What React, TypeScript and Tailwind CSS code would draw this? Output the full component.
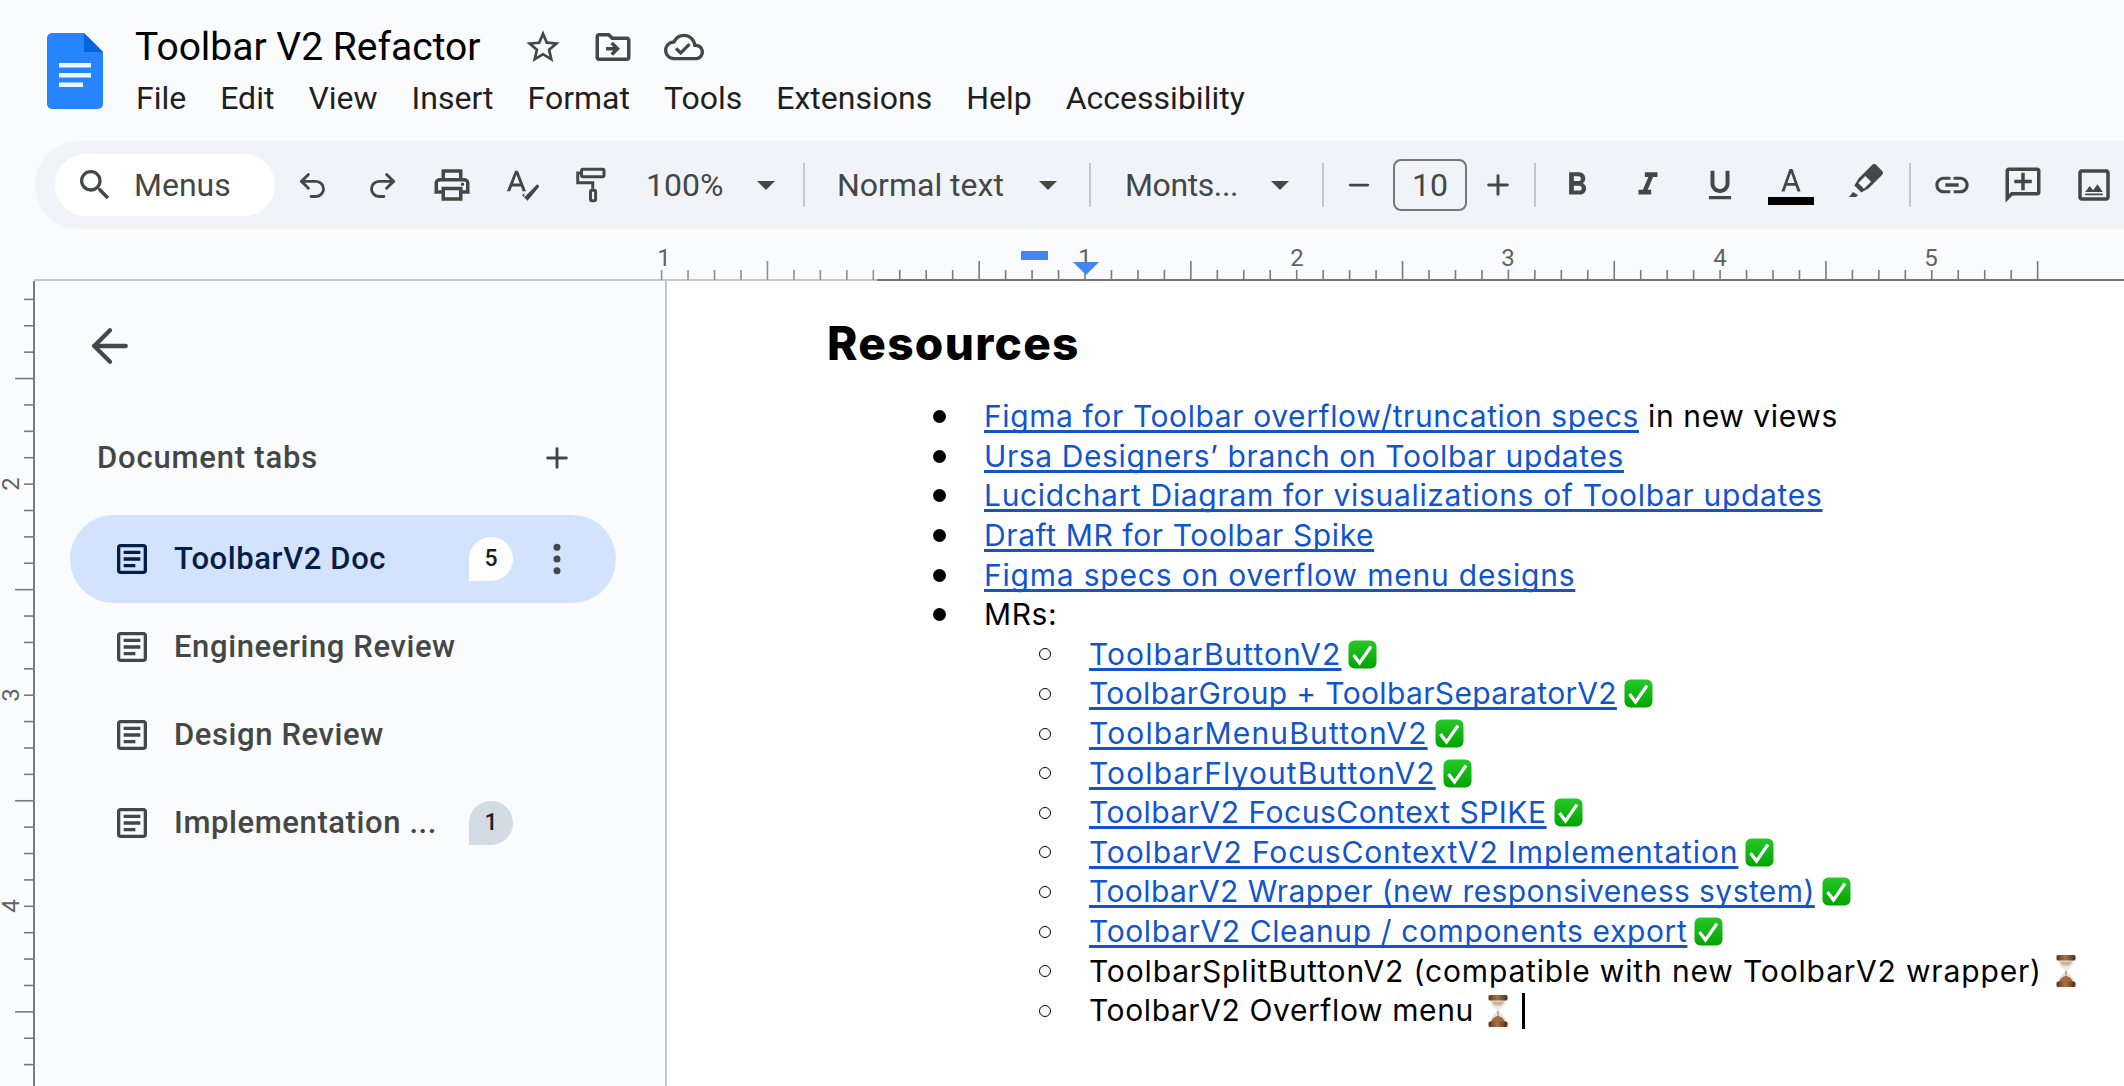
import React from "react";
import { Undo2, Redo2, ArrowLeft, Plus, Minus, EllipsisVertical } from "lucide-react";

const ui = "font-['Roboto',sans-serif]";
const doc = "font-['Inter',sans-serif]";

function M({ d, size = 34, className = "" }: { d: string; size?: number; className?: string }) {
  return (
    <svg width={size} height={size} viewBox="0 0 24 24" className={`fill-[#444746] shrink-0 ${className}`}>
      <path d={d} />
    </svg>
  );
}

const P = {
  star: "M22 9.24l-7.19-.62L12 2 9.19 8.63 2 9.24l5.46 4.73L5.82 21 12 17.27 18.18 21l-1.63-7.03L22 9.24zM12 15.4l-3.76 2.27 1-4.28-3.32-2.88 4.38-.38L12 6.1l1.71 4.04 4.38.38-3.32 2.88 1 4.28L12 15.4z",
  move: "M20 6h-8l-2-2H4c-1.1 0-1.99.9-1.99 2L2 18c0 1.1.9 2 2 2h16c1.1 0 2-.9 2-2V8c0-1.1-.9-2-2-2zm0 12H4V6h5.17l2 2H20v10zm-8.01-9l-1.41 1.41L12.16 12H8v2h4.16l-1.59 1.59L11.99 17 16 13.01 11.99 9z",
  cloud: "M19.35 10.04C18.67 6.59 15.64 4 12 4 9.11 4 6.6 5.64 5.35 8.04 2.34 8.36 0 10.91 0 14c0 3.31 2.69 6 6 6h13c2.76 0 5-2.24 5-5 0-2.64-2.05-4.78-4.65-4.96zM19 18H6c-2.21 0-4-1.79-4-4 0-2.05 1.53-3.76 3.56-3.97l1.07-.11.5-.95C8.08 7.14 9.94 6 12 6c2.62 0 4.88 1.86 5.39 4.43l.3 1.5 1.53.11c1.56.1 2.78 1.41 2.78 2.96 0 1.65-1.35 3-3 3zm-9-3.82l-2.09-2.09L6.5 13.5 10 17l6.01-6.01-1.41-1.41z",
  search: "M15.5 14h-.79l-.28-.27C15.41 12.59 16 11.11 16 9.5 16 5.91 13.09 3 9.5 3S3 5.91 3 9.5 5.91 16 9.5 16c1.61 0 3.09-.59 4.23-1.57l.27.28v.79l5 4.99L20.49 19l-4.99-5zm-6 0C7.01 14 5 11.99 5 9.5S7.01 5 9.5 5 14 7.01 14 9.5 11.99 14 9.5 14z",
  print: "M19 8h-1V3H6v5H5c-1.66 0-3 1.34-3 3v6h4v4h12v-4h4v-6c0-1.66-1.34-3-3-3zM8 5h8v3H8V5zm8 12v2H8v-4h8v2zm2-2v-2H6v2H4v-4c0-.55.45-1 1-1h14c.55 0 1 .45 1 1v4h-2zm0-4.5a1 1 0 1 0 0 2 1 1 0 0 0 0-2z",
  spell: "M12.45 16h2.09L9.43 3H7.57L2.46 16h2.09l1.12-3h5.64l1.14 3zm-6.02-5L8.5 5.48 10.57 11H6.43zm15.16.59l-8.09 8.09L13.5 17l-1.4 1.4 3.4 3.6L23 13l-1.41-1.41z",
  bold: "M15.6 10.79c.97-.67 1.65-1.77 1.65-2.79 0-2.26-1.75-4-4-4H7v14h7.04c2.09 0 3.71-1.7 3.71-3.79 0-1.52-.86-2.82-2.15-3.42zM10 6.5h3c.83 0 1.5.67 1.5 1.5s-.67 1.5-1.5 1.5h-3v-3zm3.5 9H10v-3h3.5c.83 0 1.5.67 1.5 1.5s-.67 1.5-1.5 1.5z",
  italic: "M10 4v3h2.21l-3.42 8H6v3h8v-3h-2.21l3.42-8H18V4z",
  under: "M12 17c3.31 0 6-2.69 6-6V3h-2.5v8c0 1.93-1.57 3.5-3.5 3.5S8.5 12.93 8.5 11V3H6v8c0 3.31 2.69 6 6 6zm-7 2v2h14v-2H5z",
  link: "M3.9 12c0-1.71 1.39-3.1 3.1-3.1h4V7H7c-2.76 0-5 2.24-5 5s2.24 5 5 5h4v-1.9H7c-1.71 0-3.1-1.39-3.1-3.1zM8 13h8v-2H8v2zm9-6h-4v1.9h4c1.71 0 3.1 1.39 3.1 3.1s-1.39 3.1-3.1 3.1h-4V17h4c2.76 0 5-2.24 5-5s-2.24-5-5-5z",
  comment: "M4 2h16a2 2 0 0 1 2 2v12a2 2 0 0 1-2 2H6l-4 4V4a2 2 0 0 1 2-2zm0 2v13.17L5.17 16H20V4H4zm7 1h2v4h4v2h-4v4h-2v-4H7V9h4V5z",
  image: "M19 5v14H5V5h14m0-2H5c-1.1 0-2 .9-2 2v14c0 1.1.9 2 2 2h14c1.1 0 2-.9 2-2V5c0-1.1-.9-2-2-2zM7 16l2.5-3.5L11.5 15l2.5-3.5 3 4.500H7zm0 .8h10v1H7z",
  article: "M19 5v14H5V5h14m0-2H5c-1.1 0-2 .9-2 2v14c0 1.1.9 2 2 2h14c1.1 0 2-.9 2-2V5c0-1.1-.9-2-2-2zM14 17H7v-2h7v2zm3-4H7v-2h10v2zm0-4H7V7h10v2z",
};

function DocsLogo() {
  return (
    <svg width="56" height="76" viewBox="0 0 56 76" className="shrink-0">
      <path d="M5 0h32l19 19v52a5 5 0 0 1-5 5H5a5 5 0 0 1-5-5V5a5 5 0 0 1 5-5z" fill="#2684fc" />
      <path d="M37 0l19 19H37V0z" fill="#0066da" />
      <path d="M12 30h32v4.500H12zM12 40h32v4.500H12zM12 49.500h24v4.500H12z" fill="#fff" fillOpacity="0.92" />
    </svg>
  );
}

function Caret() {
  return <span className="w-0 h-0 border-l-[9px] border-r-[9px] border-t-[9px] border-l-transparent border-r-transparent border-t-[#444746]" />;
}

function Sep() {
  return <span className="w-[2px] h-[44px] bg-[#c7c7c7] shrink-0" />;
}

function Btn({ w = "w-[70px]", children }: { w?: string; children: React.ReactNode }) {
  return <span className={`${w} h-full flex items-center justify-center shrink-0`}>{children}</span>;
}

function PaintRoller() {
  return (
    <svg width="36" height="38" viewBox="0 0 24 25" fill="none" stroke="#444746" strokeWidth="2" className="shrink-0">
      <rect x="5" y="2" width="15" height="5" rx="1" />
      <path d="M5 4.500H2.500V11H12.500V15" />
      <rect x="11" y="16" width="3.400" height="7" rx="1" />
    </svg>
  );
}

function Highlighter() {
  return (
    <svg width="36" height="36" viewBox="0 0 36 36" className="shrink-0 -mt-[6px]">
      <g transform="rotate(45 18 18)">
        <rect x="11" y="-2" width="14" height="24" rx="3" fill="#444746" />
        <path d="M11 20h14l-2 8H13z" fill="#444746" />
        <rect x="14" y="13.500" width="8" height="10" fill="#f0f4f9" />
      </g>
      <path d="M2 33l4-5 5 3-2 2z" fill="#444746" />
    </svg>
  );
}

function TextColor() {
  return (
    <span className="flex flex-col items-center w-[46px]">
      <svg width="30" height="30" viewBox="0 0 20 20" className="fill-[#444746]">
        <path d="M9 2 3.600 17h2.100l1.300-3.800h6l1.300 3.800h2.100L11 2H9zm-1.400 9.400L10 4.600l2.400 6.800H7.600z" />
      </svg>
      <span className="w-[46px] h-[8px] bg-black mt-[1px]" />
    </span>
  );
}

function Toolbar() {
  return (
    <div className={`${ui} ml-[35px] h-[88px] rounded-l-[44px] bg-[#f0f4f9] flex items-center text-[#444746] text-[32px] overflow-hidden`}>
      <div className="ml-[20px] w-[220px] h-[62px] rounded-full bg-white flex items-center pl-[20px] shrink-0">
        <M d={P.search} size={40} />
        <span className="ml-[19px]">Menus</span>
      </div>
      <span className="w-[2px] shrink-0" />
      <Btn><Undo2 size={33} strokeWidth={2.1} color="#444746" /></Btn>
      <Btn><Redo2 size={33} strokeWidth={2.1} color="#444746" /></Btn>
      <Btn><M d={P.print} size={42} /></Btn>
      <Btn><M d={P.spell} size={38} /></Btn>
      <Btn><PaintRoller /></Btn>
      <span className="ml-[19px] w-[82px] shrink-0">100%</span>
      <span className="ml-[29px] w-[18px] flex"><Caret /></span>
      <span className="ml-[28px] flex"><Sep /></span>
      <span className="ml-[32px] w-[172px] shrink-0">Normal text</span>
      <span className="ml-[30px] w-[18px] flex"><Caret /></span>
      <span className="ml-[32px] flex"><Sep /></span>
      <span className="ml-[34px] w-[114px] shrink-0 tracking-[-0.4px]">Monts...</span>
      <span className="ml-[32px] w-[18px] flex"><Caret /></span>
      <span className="ml-[33px] flex"><Sep /></span>
      <Btn w="w-[69px]"><Minus size={30} strokeWidth={2.2} color="#444746" /></Btn>
      <span className="w-[74px] h-[52px] rounded-[8px] border-2 border-[#747775] flex items-center justify-center shrink-0">10</span>
      <Btn w="w-[62px]"><Plus size={32} strokeWidth={2.2} color="#444746" /></Btn>
      <span className="ml-[5px] flex"><Sep /></span>
      <Btn w="w-[81px]"><M d={P.bold} size={38} /></Btn>
      <Btn w="w-[62px]"><M d={P.italic} size={38} /></Btn>
      <Btn w="w-[82px]"><M d={P.under} size={38} /></Btn>
      <Btn w="w-[60px]"><TextColor /></Btn>
      <Btn w="w-[88px]"><Highlighter /></Btn>
      <Sep />
      <Btn w="w-[82px]"><M d={P.link} size={40} /></Btn>
      <Btn w="w-[60px]"><M d={P.comment} size={42} /></Btn>
      <Btn w="w-[82px]"><M d={P.image} size={42} /></Btn>
    </div>
  );
}

function HRuler() {
  const origin = 1085;
  const inch = 211.7;
  const ticks: React.ReactNode[] = [];
  for (let i = -16; i <= 36; i++) {
    const x = origin + (i * inch) / 8;
    if (x < 36 || x > 2124) continue;
    const tall = ((i % 8) + 8) % 8 === 4;
    const col = x < 877 ? "#8f8f8f" : "#7a7a7a";
    ticks.push(<line key={i} x1={x} x2={x} y1={tall ? 32 : 41} y2={51} stroke={col} strokeWidth={1.6} />);
  }
  const nums: [string, number][] = [["1", 664], ["1", 1085], ["2", 1297], ["3", 1508], ["4", 1720], ["5", 1931]];
  return (
    <svg width="2124" height="52" className="block shrink-0">
      <line x1="34" x2="877" y1="51" y2="51" stroke="#c7c7c7" strokeWidth="2" />
      <line x1="877" x2="2124" y1="51" y2="51" stroke="#757575" strokeWidth="2" />
      {ticks}
      {nums.map(([n, x], i) => (
        <text key={i} x={x} y={37} textAnchor="middle" fontFamily="Roboto, sans-serif" fontSize="24" fill="#5f6368">{n}</text>
      ))}
      <rect x="1021" y="22" width="27" height="9" fill="#4285f4" />
      <path d="M1073 33h26l-13 13z" fill="#4285f4" />
    </svg>
  );
}

function VRuler() {
  const origin = 273;
  const inch = 211.1;
  const ticks: React.ReactNode[] = [];
  for (let i = 1; i <= 32; i++) {
    const y = origin + (i * inch) / 8 - 281;
    if (y < 2) continue;
    const tall = i % 8 === 4;
    ticks.push(<line key={i} y1={y} y2={y} x1={tall ? 15 : 24} x2={34} stroke="#7a7a7a" strokeWidth={1.6} />);
  }
  const num = "absolute left-[1px] w-[20px] h-[28px] flex items-center justify-center -rotate-90 text-[24px] leading-none text-[#5f6368]";
  return (
    <div className="relative w-[35px] h-[805px] shrink-0">
      <svg width="35" height="805" className="block">
        <line x1="34" x2="34" y1="0" y2="805" stroke="#7a7a7a" strokeWidth="2" />
        {ticks}
      </svg>
      <span className={`${num} top-[189px]`}>2</span>
      <span className={`${num} top-[400px]`}>3</span>
      <span className={`${num} top-[611px]`}>4</span>
    </div>
  );
}

function Badge({ n, active }: { n: number; active?: boolean }) {
  return (
    <span className={`absolute left-[399px] top-[22px] w-[44px] h-[44px] rounded-full rounded-bl-none flex items-center justify-center text-[23px] font-medium tracking-normal text-[#1f1f1f] ${active ? "bg-white" : "bg-[#d3dbe5]"}`}>
      {n}
    </span>
  );
}

function Tab({ label, active, badge }: { label: string; active?: boolean; badge?: number }) {
  return (
    <div className={`relative h-[88px] w-[546px] flex items-center pl-[42px] shrink-0 ${active ? "bg-[#d3e3fd] rounded-full text-[#041e49]" : "text-[#444746]"}`}>
      <svg width="40" height="40" viewBox="0 0 24 24" className={`shrink-0 ${active ? "fill-[#041e49]" : "fill-[#444746]"}`}>
        <path d={P.article} />
      </svg>
      <span className="ml-[22px] text-[31px] font-medium whitespace-nowrap tracking-[0.6px]">{label}</span>
      {badge !== undefined && <Badge n={badge} active={active} />}
      {active && (
        <span className="absolute left-[467px] top-[24px]">
          <EllipsisVertical size={40} strokeWidth={2.2} color="#444746" />
        </span>
      )}
    </div>
  );
}

function Sidebar() {
  return (
    <aside className={`${ui} w-[632px] shrink-0 border-r-2 border-[#c7c7c7] flex flex-col pl-[35px]`}>
      <div className="mt-[43px] ml-[13px] h-[44px] flex items-center">
        <ArrowLeft size={54} strokeWidth={1.9} color="#444746" />
      </div>
      <div className="mt-[68px] h-[44px] flex items-center justify-between pl-[27px] w-[503px] text-[#444746]">
        <span className="text-[31px] font-medium tracking-[0.8px]">Document tabs</span>
        <Plus size={32} strokeWidth={2.2} color="#444746" />
      </div>
      <div className="mt-[35px] flex flex-col">
        <Tab label="ToolbarV2 Doc" active badge={5} />
        <Tab label="Engineering Review" />
        <Tab label="Design Review" />
        <Tab label="Implementation ..." badge={1} />
      </div>
    </aside>
  );
}

function Check() {
  return (
    <svg width="29" height="29" viewBox="0 0 29 29" role="img" aria-label="✅" className="shrink-0 inline-block">
      <defs>
        <linearGradient id="chk" x1="0" y1="0" x2="0" y2="1">
          <stop offset="0" stopColor="#27c92a" />
          <stop offset="1" stopColor="#00a400" />
        </linearGradient>
      </defs>
      <rect x="0.5" y="0.5" width="28" height="28" rx="6" fill="url(#chk)" />
      <polyline points="5.5,15 11.5,23 23,6.5" fill="none" stroke="#fff" strokeWidth="3.2" />
    </svg>
  );
}

function Hourglass() {
  return (
    <svg width="20" height="32" viewBox="0 0 20 32" role="img" aria-label="⏳" className="shrink-0 inline-block">
      <defs>
        <linearGradient id="cap" x1="0" y1="0" x2="1" y2="0">
          <stop offset="0" stopColor="#5c3218" />
          <stop offset="0.45" stopColor="#a9744a" />
          <stop offset="1" stopColor="#4f2a14" />
        </linearGradient>
      </defs>
      <path d="M2 5h16c0 6-5 8-7 11 2 3 7 5 7 11H2c0-6 5-8 7-11-2-3-7-5-7-11z" fill="#e9e8e6" />
      <path d="M4 6.500h12c-.5 2-2 3-3 4H7c-1-1-2.500-2-3-4z" fill="#c9b79c" />
      <path d="M9.400 16h1.200v5h-1.200z" fill="#b9854f" />
      <path d="M3 27c.6-3 3.500-5.500 7-6 3.500.5 6.400 3 7 6z" fill="#a5693a" />
      <rect x="0.5" y="0" width="19" height="5.500" rx="1.500" fill="url(#cap)" />
      <rect x="0.5" y="26.500" width="19" height="5.500" rx="1.500" fill="url(#cap)" />
    </svg>
  );
}

function A({ children, t = "" }: { children: React.ReactNode; t?: string }) {
  return <span className={`text-[#1155cc] underline decoration-[3px] underline-offset-[3px] [text-decoration-skip-ink:none] ${t}`}>{children}</span>;
}

function Top({ children }: { children: React.ReactNode }) {
  return (
    <li className="flex items-center h-[39.6px] whitespace-nowrap">
      <span className="w-[13px] h-[13px] rounded-full bg-black shrink-0 mr-[38px] -ml-[1px]" />
      <span>{children}</span>
    </li>
  );
}

function Sub({ children, icon, ml = "ml-[7px]" }: { children: React.ReactNode; icon?: React.ReactNode; ml?: string }) {
  return (
    <li className="flex items-center h-[39.6px] whitespace-nowrap pl-[105px]">
      <span className="w-[12px] h-[12px] rounded-full border-[1.5px] border-black shrink-0 mr-[38px]" />
      <span>{children}</span>
      {icon && <span className={`${ml} flex items-center`}>{icon}</span>}
    </li>
  );
}

function Doc() {
  const links: [string, string][] = [
    ["ToolbarButtonV2", "tracking-[1.05px]"],
    ["ToolbarGroup + ToolbarSeparatorV2", "tracking-[0.35px]"],
    ["ToolbarMenuButtonV2", "tracking-[1.15px]"],
    ["ToolbarFlyoutButtonV2", "tracking-[1.1px]"],
    ["ToolbarV2 FocusContext SPIKE", "tracking-[0.5px]"],
    ["ToolbarV2 FocusContextV2 Implementation", "tracking-[0.85px]"],
    ["ToolbarV2 Wrapper (new responsiveness system)", "tracking-[0.42px]"],
    ["ToolbarV2 Cleanup / components export", "tracking-[0.62px]"],
  ];
  return (
    <main className={`${doc} flex-1 bg-white text-black overflow-hidden text-[30px] tracking-[0.6px]`}>
      <h2 className="ml-[160px] mt-[33px] h-[58px] flex items-center text-[46px] font-extrabold leading-none tracking-[1.3px]">Resources</h2>
      <ul className="ml-[267px] mt-[25px]">
        <Top><A>Figma for Toolbar overflow/truncation specs</A> in new views</Top>
        <Top><A>Ursa Designers’ branch on Toolbar updates</A></Top>
        <Top><A t="tracking-[0.67px]">Lucidchart Diagram for visualizations of Toolbar updates</A></Top>
        <Top><A>Draft MR for Toolbar Spike</A></Top>
        <Top><A t="tracking-[0.8px]">Figma specs on overflow menu designs</A></Top>
        <Top>MRs:</Top>
        {links.map(([l, t]) => (
          <Sub key={l} icon={<Check />}><A t={t}>{l}</A></Sub>
        ))}
        <Sub ml="ml-[14px]" icon={<Hourglass />}><span className="tracking-[0.85px]">ToolbarSplitButtonV2 (compatible with new ToolbarV2 wrapper)</span></Sub>
        <Sub ml="ml-[14px]" icon={<><Hourglass /><span className="w-[3px] h-[36px] bg-black ml-[14px]" /></>}>ToolbarV2 Overflow menu</Sub>
      </ul>
    </main>
  );
}

export default function App() {
  const menus = ["File", "Edit", "View", "Insert", "Format", "Tools", "Extensions", "Help", "Accessibility"];
  return (
    <div className={`${ui} w-[2124px] h-[1086px] bg-[#f9fbfd] overflow-hidden flex flex-col`}>
      <header className="h-[141px] flex pl-[47px] pt-[33px] shrink-0">
        <DocsLogo />
        <div className="ml-[32px] -mt-[10px]">
          <div className="flex items-center h-[48px]">
            <span className="text-[39px] text-black w-[388px] whitespace-nowrap">Toolbar V2 Refactor</span>
            <M d={P.star} size={40} />
            <M d={P.move} size={42} className="ml-[29px]" />
            <M d={P.cloud} size={40} className="ml-[30px]" />
          </div>
          <nav className="flex gap-[34px] mt-[3px] text-[32px] leading-[48px] text-[#1f1f1f] ml-[1px]">
            {menus.map((m) => <span key={m}>{m}</span>)}
          </nav>
        </div>
      </header>
      <Toolbar />
      <HRuler />
      <div className="flex h-[805px]">
        <VRuler />
        <Sidebar />
        <Doc />
      </div>
    </div>
  );
}
